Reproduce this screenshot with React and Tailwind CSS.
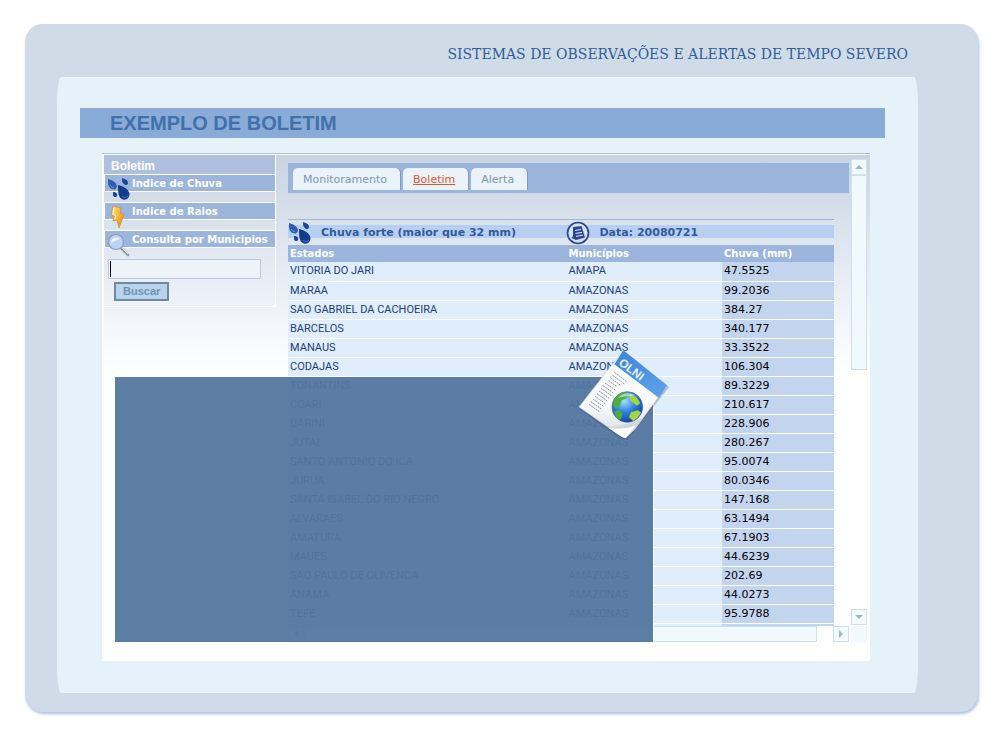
import React, { useState } from 'react';

const menuItems = [
  { label: 'Indice de Chuva', icon: 'rain' },
  { label: 'Indice de Raios', icon: 'bolt' },
  { label: 'Consulta por Municipios', icon: 'search' },
];

const tabs = ['Monitoramento', 'Boletim', 'Alerta'];

const rows = [
  ['VITORIA DO JARI', 'AMAPA', '47.5525'],
  ['MARAA', 'AMAZONAS', '99.2036'],
  ['SAO GABRIEL DA CACHOEIRA', 'AMAZONAS', '384.27'],
  ['BARCELOS', 'AMAZONAS', '340.177'],
  ['MANAUS', 'AMAZONAS', '33.3522'],
  ['CODAJAS', 'AMAZONAS', '106.304'],
  ['TONANTINS', 'AMAZONAS', '89.3229'],
  ['COARI', 'AMAZONAS', '210.617'],
  ['UARINI', 'AMAZONAS', '228.906'],
  ['JUTAI', 'AMAZONAS', '280.267'],
  ['SANTO ANTONIO DO ICA', 'AMAZONAS', '95.0074'],
  ['JURUA', 'AMAZONAS', '80.0346'],
  ['SANTA ISABEL DO RIO NEGRO', 'AMAZONAS', '147.168'],
  ['ALVARAES', 'AMAZONAS', '63.1494'],
  ['AMATURA', 'AMAZONAS', '67.1903'],
  ['MAUES', 'AMAZONAS', '44.6239'],
  ['SAO PAULO DE OLIVENCA', 'AMAZONAS', '202.69'],
  ['ANAMA', 'AMAZONAS', '44.0273'],
  ['TEFE', 'AMAZONAS', '95.9788'],
];

const RainIcon = () => (
  <svg width="24" height="24" viewBox="0 0 24 24" className="shrink-0">
    <path d="M1 2C5 3 9 5 10 9c0 3-3 4-5 3C1 11 1 6 1 2z" fill="#2f5cac" />
    <path d="M15 1c3 1 6 2 6 5 0 2-3 3-4 1-2-1-2-4-2-6z" fill="#1d4696" />
    <path d="M11 8c5 1 11 4 11.500 9 0 4-3 6.500-6.500 5.500-5-1-5-8.500-5-14.500z" fill="#123d8c" />
    <path d="M6 15c3 0 5 2 4 4-1 2-4 1-4-1z" fill="#1d4696" />
    <path d="M15 19c1 2 4 2 6 0" stroke="#4c7cc4" fill="none" />
    <path d="M3 8c1 2 3 3 4 2" stroke="#7397d2" fill="none" />
  </svg>
);

const BoltIcon = () => (
  <svg width="24" height="24" viewBox="0 0 24 24" className="shrink-0">
    <defs>
      <linearGradient id="bolt" x1="0" y1="0" x2="1" y2=".6">
        <stop offset="0" stopColor="#ffe78a" />
        <stop offset="1" stopColor="#f39412" />
      </linearGradient>
    </defs>
    <path
      d="M6 1L14 3 13.500 8 17 9.500 12 23 10 15 6 16 7 11 4 10z"
      fill="url(#bolt)"
      stroke="#c48a3c"
      strokeWidth=".7"
    />
    <path d="M7 3l-1 6 3 2-1 3" stroke="#fff6c8" fill="none" />
  </svg>
);

const SearchIcon = () => (
  <svg width="24" height="24" viewBox="0 0 24 24" className="shrink-0">
    <path d="M14 15l7 7" stroke="#8c99ab" strokeWidth="2.500" strokeLinecap="round" />
    <path d="M14 14l7 7" stroke="#e3e8ee" strokeWidth="1" />
    <circle cx="9" cy="9" r="7.500" fill="#bcd3f4" stroke="#8b9dbb" strokeWidth="1.200" />
    <path d="M4 10c0-5 5-7 9-4-3 1-6 2-9 4z" fill="#eaf3ff" />
  </svg>
);

const NoteIcon = () => (
  <svg width="24" height="24" viewBox="0 0 24 24" className="shrink-0">
    <circle cx="12" cy="12" r="10.500" fill="#d3e0f5" stroke="#2c4590" strokeWidth="1.700" />
    <path d="M7 6L15.500 5l3.500 11.500-9 2.500-4.500-2 1.500-2z" fill="#2c4590" />
    <path d="M9 9.500l6-1M9.500 12.500l6.500-1.200M10 15.500l7-1.500" stroke="#d3e0f5" strokeWidth="1.200" />
  </svg>
);

const DocumentIcon = () => (
  <svg width="96" height="96" viewBox="0 0 288 288">
    <defs>
      <radialGradient id="globe" cx=".4" cy=".3" r=".75">
        <stop offset="0" stopColor="#9fe0ff" />
        <stop offset=".5" stopColor="#2f80dc" />
        <stop offset="1" stopColor="#123c96" />
      </radialGradient>
      <linearGradient id="band" x1="0" y1="0" x2="1" y2="1">
        <stop offset="0" stopColor="#3f84d2" />
        <stop offset="1" stopColor="#5ea4ec" />
      </linearGradient>
      <linearGradient id="paper" x1="0" y1="0" x2="0" y2="1">
        <stop offset=".6" stopColor="#fafbfc" />
        <stop offset="1" stopColor="#d8dce2" />
      </linearGradient>
    </defs>
    <path d="M148 16L282 120 160 276 140 278 12 186z" fill="#3c4c66" opacity=".3" />
    <path d="M145 10L276 115 180 246 152 272Q144 272 136 266L12 180z" fill="url(#paper)" stroke="#c9ced6" strokeWidth="2" />
    <path d="M145 10L276 115 252 153 118 52z" fill="url(#band)" />
    <text x="129" y="52" transform="rotate(37 129 52)" fill="#e4f1ff" fontFamily="Liberation Sans" fontWeight="bold" fontSize="35">OLNI</text>
    <g stroke="#8d949e" strokeWidth="3" strokeDasharray="6 2">
      <path d="M118 76l36 27M112 84l36 27M106 92l32 24M100 100l24 18" />
      <path d="M90 108l32 22M84 116l31 22M78 124l31 22M72 132l31 22M66 140l31 22M60 148l31 22M54 156l31 22M48 164l31 22M42 172l31 22" />
    </g>
    <path d="M96 238q50 2 108-26l-26 36-26 24q-8 0-16-6z" fill="#d3d7de" />
    <path d="M100 242q40 8 82-6l-30 36q-8 0-16-6z" fill="#fff" />
    <circle cx="157" cy="180" r="46" fill="url(#globe)" stroke="#3b62a0" strokeWidth="2" />
    <path d="M114 172c2-18 16-32 32-36l16 4-8 14-14 6-6 16-14 8zM118 194l14-6 10 10-2 16-8 4c-8-6-13-14-14-24z" fill="#4fae3c" />
    <path d="M166 142l18 8 12 18-10 8-14-10-10-12zM168 196l20-6 10 6c-4 12-12 20-24 26l-12-12z" fill="#a4d43f" />
    <path d="M130 152c14-16 38-16 50-6-18 0-34 2-50 6z" fill="#fff" opacity=".5" />
  </svg>
);

const icons = { rain: RainIcon, bolt: BoltIcon, search: SearchIcon };

const ArrowButton = ({ label, path }) => (
  <button
    type="button"
    aria-label={label}
    className="w-4 h-4 shrink-0 flex items-center justify-center bg-[#f3fafe] border border-[#cbe1ee]"
  >
    <svg width="8" height="8" viewBox="0 0 8 8">
      <path d={path} fill="#9db6cc" />
    </svg>
  </button>
);

const Sidebar = () => (
  <aside className="w-[172px] shrink-0 self-start border-r border-b border-white pb-[5px]">
    <h2 className="h-[19px] pl-[7px] pt-[3px] bg-[#afc0de] text-white text-[12px] leading-4 font-bold font-['Liberation_Sans',sans-serif]">
      Boletim
    </h2>
    <ul className="flex flex-col gap-[10px]">
      {menuItems.map((item) => {
        const Icon = icons[item.icon];
        return (
          <li key={item.label} className="h-[18px] border-y border-l border-white bg-[#9bb5dd]">
            <a href="#" className="flex items-start gap-px pl-[2px] text-white text-[10px] leading-[18px] font-bold whitespace-nowrap">
              <span className="pt-[2px] -mb-3">
                <Icon />
              </span>
              {item.label}
            </a>
          </li>
        );
      })}
    </ul>
    <form className="pl-1 pt-[11px]" onSubmit={(e) => e.preventDefault()}>
      <div className="relative">
        <input
          type="text"
          aria-label="Consulta por Municipios"
          className="block w-[153px] h-5 px-1 bg-[#eef3fa] border border-[#bccbdc] text-[11px] outline-none"
        />
        <span className="absolute left-[2px] top-[2px] w-px h-4 bg-black" />
      </div>
      <button
        type="submit"
        className="block ml-[6px] mt-[3px] h-[19px] px-[7px] bg-[#b8d4ea] border-2 border-[#71899c] text-[#6d93b8] text-[11px] leading-[15px] font-bold font-['Liberation_Sans',sans-serif]"
      >
        Buscar
      </button>
    </form>
  </aside>
);

const RainTable = () => (
  <table className="w-full table-fixed border-collapse text-left text-[11px]">
    <colgroup>
      <col className="w-[51%]" />
      <col />
      <col className="w-[112px]" />
    </colgroup>
    <thead>
      <tr className="h-[25px] border-t border-[#9db5d6] text-[#335a9c] leading-4">
        <th className="p-0">
          <div className="h-[25px] flex items-center gap-[9px] bg-[linear-gradient(transparent_5px,#b6cff3_5px,#b6cff3_18px,transparent_18px)]">
            <RainIcon />
            <span>Chuva forte (maior que 32 mm)</span>
          </div>
        </th>
        <th colSpan="2" className="p-0">
          <div className="h-[25px] flex items-center gap-[9px] bg-[linear-gradient(transparent_5px,#b6cff3_5px,#b6cff3_18px,transparent_18px)]">
            <NoteIcon />
            <span>Data: 20080721</span>
          </div>
        </th>
      </tr>
      <tr className="h-[17px] bg-[#9bb5dc] text-white text-[10px] leading-[17px]">
        <th className="p-0 pl-[2px]">Estados</th>
        <th className="p-0 pl-[2px]">Municípios</th>
        <th className="p-0 pl-[2px]">Chuva (mm)</th>
      </tr>
    </thead>
    <tbody>
      {rows.map(([city, state, value]) => (
        <tr key={city} className="h-[19px] border-b border-white bg-[#e0edfb] text-[#21407c] leading-4">
          <td className="py-0 px-[2px] font-[Roboto,sans-serif]">{city}</td>
          <td className="py-0 px-[2px] font-[Roboto,sans-serif]">{state}</td>
          <td className="py-0 px-[2px] bg-[#c3d4ee] text-black">{value}</td>
        </tr>
      ))}
      <tr className="h-[19px] bg-[#e0edfb]">
        <td />
        <td />
        <td className="bg-[#c3d4ee]" />
      </tr>
    </tbody>
  </table>
);

export default function App() {
  const [activeTab, setActiveTab] = useState('Boletim');

  return (
    <div className="bg-white pt-6 pl-[25px] pr-[22px] pb-[26px] font-['DejaVu_Sans',sans-serif]">
      <div className="rounded-[18px] bg-[#cfdbe7] shadow-[1px_2px_3px_#a9bfe2] pl-8 pr-[60px] pb-[19px]">
        {/* Header */}
        <header className="h-[53px] pt-[21px] pr-[10px] text-right text-[14px] leading-[18px] text-[#2f5c9c] whitespace-nowrap font-['DejaVu_Serif',serif]">
          SISTEMAS DE OBSERVAÇÕES E ALERTAS DE TEMPO SEVERO
        </header>

        <main className="bg-[#e6f2f9] rounded-[4px/28px] pt-[31px] pb-8">
          <h1 className="ml-[23px] mr-[33px] h-[30px] pl-[30px] bg-[#88abd7] text-[#4470aa] text-[20px] leading-[30px] font-bold font-['Liberation_Sans',sans-serif]">
            EXEMPLO DE BOLETIM
          </h1>

          <div className="relative ml-[45px] mr-12 mt-[15px] pb-[19px] bg-white border-t border-[#a9c2dc]">
            <div className="flex border-t border-l-2 border-white bg-[linear-gradient(#c9d4e2,#d5dee8_50px,#e9eef6_130px,#fff_220px)]">
              <Sidebar />

              {/* Report */}
              <section className="flex-1 min-w-0 ml-3">
                <div className="h-[471px] pt-2 overflow-hidden">
                  <nav className="h-[30px] bg-[#9bb5dc] pl-[5px] pt-[5px] flex gap-[3px]">
                    {tabs.map((tab) => (
                      <button
                        key={tab}
                        type="button"
                        onClick={() => setActiveTab(tab)}
                        className={`h-[22px] pl-[10px] pr-[13px] rounded-t-[5px] bg-[#e9f3f9] text-[11px] leading-6 shadow-[1px_0_0_#7f9cc0] ${
                          tab === activeTab ? 'text-[#e2592f] underline' : 'text-[#7d97b5]'
                        }`}
                      >
                        {tab}
                      </button>
                    ))}
                  </nav>
                  <div className="mt-[26px] mr-[15px]">
                    <RainTable />
                  </div>
                </div>
                <div className="h-4 flex bg-white">
                  <ArrowButton label="Rolar para a esquerda" path="M6 0v8L2 4z" />
                  <div className="flex-1 pr-4">
                    <div className="h-4 bg-[#f0f9fd] border border-[#cbe1ee]" />
                  </div>
                  <ArrowButton label="Rolar para a direita" path="M2 0v8l4-4z" />
                </div>
              </section>

              {/* Vertical scrollbar */}
              <div className="w-4 ml-[2px] mr-[3px] pt-1 flex flex-col">
                <ArrowButton label="Rolar para cima" path="M0 6h8L4 2z" />
                <div className="flex-1">
                  <div className="h-[195px] bg-[#f0f9fd] border border-[#cbe1ee]" />
                </div>
                <ArrowButton label="Rolar para baixo" path="M0 2h8L4 6z" />
                <div className="h-4 mt-px bg-[#f0f9fd]" />
              </div>
            </div>

            {/* Translucent panel and newspaper over the report */}
            <div className="absolute left-[13px] top-[223px] w-[70%] h-[265px] bg-[#53769f]/95 shadow-[1px_0_0_#fff]">
              <div className="absolute -right-[18px] -top-[30px]">
                <DocumentIcon />
              </div>
            </div>
          </div>
        </main>
      </div>
    </div>
  );
}
